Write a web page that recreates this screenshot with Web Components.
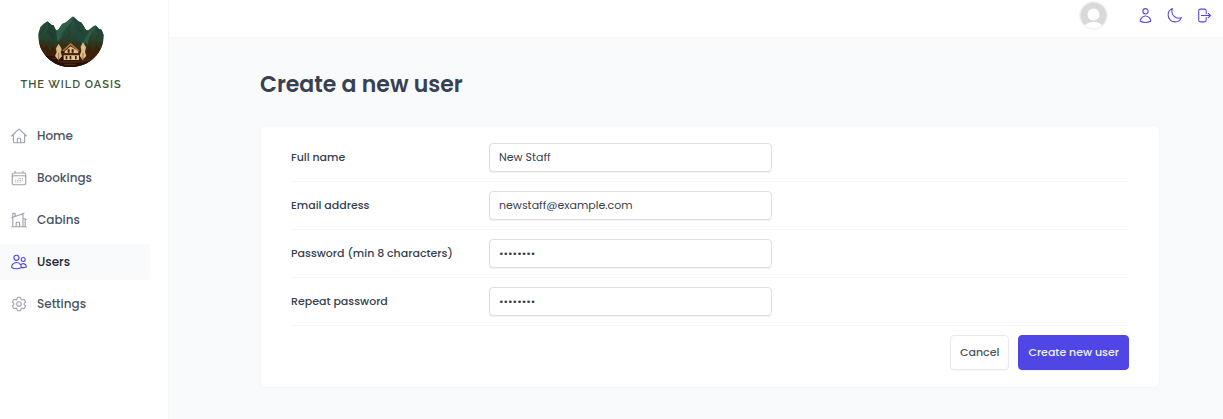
<!DOCTYPE html>
<html lang="en">
<head>
<meta charset="utf-8">
<meta name="viewport" content="width=device-width, initial-scale=1">
<title>The Wild Oasis</title>
<style>
:root {
  --brand: #4f46e5;
  --grey-0: #fff;
  --grey-50: #f9fafb;
  --grey-100: #f5f6f8;
  --grey-200: #e8eaed;
  --grey-300: #dcdfe3;
  --grey-400: #9ca3af;
  --grey-600: #4b5563;
  --grey-700: #374151;
  --grey-800: #1f2937;
}
body {
  margin: 0;
  font-family: Poppins, Inter, sans-serif;
  font-size: 11px;
  color: var(--grey-700);
  background: var(--grey-50);
}
</style>
</head>
<body>
<app-shell>
  <app-sidebar slot="sidebar">
    <app-logo slot="logo"></app-logo>
    <nav-item icon="home">Home</nav-item>
    <nav-item icon="calendar">Bookings</nav-item>
    <nav-item icon="cabin">Cabins</nav-item>
    <nav-item icon="users" active>Users</nav-item>
    <nav-item icon="cog">Settings</nav-item>
  </app-sidebar>
  <app-header slot="header"></app-header>
  <page-title>Create a new user</page-title>
  <form-card>
    <form-field label="Full name" type="text" value="New Staff"></form-field>
    <form-field label="Email address" type="email" value="newstaff@example.com"></form-field>
    <form-field label="Password (min 8 characters)" type="password" value="password"></form-field>
    <form-field label="Repeat password" type="password" value="password"></form-field>
    <app-button slot="actions" variant="secondary">Cancel</app-button>
    <app-button slot="actions" variant="primary">Create new user</app-button>
  </form-card>
</app-shell>

<script>
const ICONS = {
  home: "M2.25 12l8.954-8.955c.44-.439 1.152-.439 1.591 0L21.75 12M4.5 9.75v10.125c0 .621.504 1.125 1.125 1.125H9.75v-4.875c0-.621.504-1.125 1.125-1.125h2.25c.621 0 1.125.504 1.125 1.125V21h4.125c.621 0 1.125-.504 1.125-1.125V9.75M8.25 21h8.25",
  calendar: "M6.75 3v2.25M17.25 3v2.25M3 18.75V7.5a2.25 2.25 0 012.25-2.25h13.5A2.25 2.25 0 0121 7.5v11.25m-18 0A2.25 2.25 0 005.25 21h13.5A2.25 2.25 0 0021 18.75m-18 0v-7.5A2.25 2.25 0 015.25 9h13.5A2.25 2.25 0 0121 11.25v7.5m-9-6h.008v.008H12v-.008zM12 15h.008v.008H12V15zm0 2.25h.008v.008H12v-.008zM9.75 15h.008v.008H9.75V15zm0 2.25h.008v.008H9.75v-.008zM7.5 15h.008v.008H7.5V15zm0 2.25h.008v.008H7.5v-.008zm6.75-4.5h.008v.008h-.008v-.008zm0 2.25h.008v.008h-.008V15zm0 2.25h.008v.008h-.008v-.008zm2.25-4.5h.008v.008H16.5v-.008zm0 2.25h.008v.008H16.5V15z",
  cabin: "M8.25 21v-4.875c0-.621.504-1.125 1.125-1.125h2.25c.621 0 1.125.504 1.125 1.125V21m0 0h4.5V3.545M12.75 21h7.5V10.75M2.25 21h1.5m18 0h-18M2.25 9l4.5-1.636M18.75 3l-1.5.545m0 6.205l3 1m1.5.5l-1.5-.5M6.75 7.364V3h-3v18m3-13.636l10.5-3.819",
  users: "M15 19.128a9.38 9.38 0 002.625.372 9.337 9.337 0 004.121-.952 4.125 4.125 0 00-7.533-2.493M15 19.128v-.003c0-1.113-.285-2.16-.786-3.07M15 19.128v.106A12.318 12.318 0 018.624 21c-2.331 0-4.512-.645-6.374-1.766l-.001-.109a6.375 6.375 0 0111.964-3.07M12 6.375a3.375 3.375 0 11-6.75 0 3.375 3.375 0 016.75 0zm8.25 2.25a2.625 2.625 0 11-5.25 0 2.625 2.625 0 015.25 0z",
  cog: "M9.594 3.94c.09-.542.56-.94 1.11-.94h2.593c.55 0 1.02.398 1.11.94l.213 1.281c.063.374.313.686.645.87.074.04.147.083.22.127.324.196.72.257 1.075.124l1.217-.456a1.125 1.125 0 011.37.49l1.296 2.247a1.125 1.125 0 01-.26 1.431l-1.003.827c-.293.24-.438.613-.431.992a6.759 6.759 0 010 .255c-.007.378.138.75.43.99l1.005.828c.424.35.534.954.26 1.43l-1.298 2.247a1.125 1.125 0 01-1.369.491l-1.217-.456c-.355-.133-.75-.072-1.076.124a6.57 6.57 0 01-.22.128c-.331.183-.581.495-.644.869l-.213 1.28c-.09.543-.56.941-1.11.941h-2.594c-.55 0-1.02-.398-1.11-.94l-.213-1.281c-.062-.374-.312-.686-.644-.87a6.52 6.52 0 01-.22-.127c-.325-.196-.72-.257-1.076-.124l-1.217.456a1.125 1.125 0 01-1.369-.49l-1.297-2.247a1.125 1.125 0 01.26-1.431l1.004-.827c.292-.24.437-.613.43-.992a6.932 6.932 0 010-.255c.007-.378-.138-.75-.43-.99l-1.004-.828a1.125 1.125 0 01-.26-1.43l1.297-2.247a1.125 1.125 0 011.37-.491l1.216.456c.356.133.751.072 1.076-.124.072-.044.146-.087.22-.128.332-.183.582-.495.644-.869l.214-1.281zM15 12a3 3 0 11-6 0 3 3 0 016 0z",
  user: "M15.75 6a3.75 3.75 0 11-7.5 0 3.75 3.75 0 017.5 0zM4.501 20.118a7.5 7.5 0 0114.998 0A17.933 17.933 0 0112 21.75c-2.676 0-5.216-.584-7.499-1.632z",
  moon: "M21.752 15.002A9.718 9.718 0 0118 15.75c-5.385 0-9.75-4.365-9.75-9.75 0-1.33.266-2.597.748-3.752A9.753 9.753 0 003 11.25C3 16.635 7.365 21 12.75 21a9.753 9.753 0 009.002-5.998z",
  logout: "M15.75 9V5.25A2.25 2.25 0 0013.5 3h-6a2.25 2.25 0 00-2.25 2.25v13.5A2.25 2.25 0 007.5 21h6a2.25 2.25 0 002.25-2.25V15m3 0l3-3m0 0l-3-3m3 3H9"
};
const icon = name => `<svg viewBox="0 0 24 24" fill="none" stroke="currentColor" stroke-width="1.5" stroke-linecap="round" stroke-linejoin="round" aria-hidden="true"><path d="${ICONS[name]}"/></svg>`;

function define(name, render) {
  customElements.define(name, class extends HTMLElement {
    connectedCallback() {
      if (!this.shadowRoot) this.attachShadow({ mode: "open" }).innerHTML = render(this);
    }
  });
}

define("app-shell", () => `
  <style>
    :host { display: grid; grid-template-columns: 169px 1fr; grid-template-rows: auto 1fr; min-height: 100vh; }
    aside { grid-row: 1 / 3; }
    main { padding: 30px 49px 30px 77px; }
    .content { max-width: 900px; margin: 0 auto; display: flex; flex-direction: column; gap: 24px; }
  </style>
  <aside><slot name="sidebar"></slot></aside>
  <slot name="header"></slot>
  <main><div class="content"><slot></slot></div></main>`);

define("app-sidebar", () => `
  <style>
    :host { display: flex; flex-direction: column; gap: 25px; box-sizing: border-box; min-height: 100vh;
      padding: 16px 18px 18px 0; background: var(--grey-0); border-right: 1px solid var(--grey-100); }
    nav { display: flex; flex-direction: column; gap: 6px; }
  </style>
  <slot name="logo"></slot>
  <nav aria-label="Main"><slot></slot></nav>`);

define("app-logo", () => `
  <style>
    :host { display: flex; flex-direction: column; align-items: center; gap: 9px; margin-right: 8px; }
    svg { display: block; width: 66px; height: 52px; }
    span { font: 600 11px/16px Raleway, Lato, sans-serif; letter-spacing: 1px; color: #3d5638; white-space: nowrap; }
  </style>
  <svg viewBox="26 19 198 156" aria-hidden="true">
    <defs>
      <linearGradient id="land" x1="0" y1="0" x2="0" y2="1">
        <stop offset="0" stop-color="#2b5643"/><stop offset=".42" stop-color="#264432"/>
        <stop offset=".62" stop-color="#382a12"/><stop offset="1" stop-color="#32170b"/>
      </linearGradient>
      <clipPath id="shape"><path d="M27 72L33 52L42 43L54 35L66 45L73 47L80 62L87 60L98 43L110 38L131 20L147 35L157 39L170 61L177 62L190 51L199 47L209 58L217 60L223 76C224 130 181 172 125 172C69 172 25 130 27 72Z"/></clipPath>
    </defs>
    <g clip-path="url(#shape)">
      <rect x="24" y="16" width="202" height="160" fill="url(#land)"/>
      <path d="M131 20L124 42L108 54L100 78L84 96L80 62L98 43L110 38Z" fill="#30604a"/>
      <path d="M131 20L137 45L130 55L145 69L139 84L157 104L170 86L175 66L157 39Z" fill="#22483a"/>
      <path d="M54 35L57 57L50 68L65 82L63 101L82 110L80 62L73 47Z" fill="#1f4032"/>
      <path d="M199 47L193 70L181 80L174 105L156 110L171 78L190 51Z" fill="#2f5942"/>
      <path d="M199 47L205 67L200 80L215 99L223 76L217 60Z" fill="#234433"/>
      <g fill="none" stroke="#1c382b" stroke-width="2">
        <path d="M124 41L117 59L121 74L107 91M103 65L94 81M48 43L43 60L34 72M60 66L74 89M145 50L160 75M192 63L178 96M205 77L213 84"/>
      </g>
      <path d="M22 98L34 91L37 98L44 90L50 102L57 94L63 105L71 97L79 109L89 101L100 107L160 107L168 97L176 108L185 98L192 109L202 96L211 105L225 92V120L196 126H55L22 119Z" fill="#30331a"/>
      <path d="M26 112L36 102L42 115L52 103L61 121L72 109L81 127H170L181 108L191 122L203 107L213 117L224 103V176H24Z" fill="#3c210d"/>
      <path d="M40 140Q90 136 123 151T198 148L180 176H65Z" fill="#291008"/>
      <path d="M68 146H87M91 157H151M165 151H184M105 164H139" stroke="#5c3014" stroke-width="3"/>
      <path d="M124 101L99 121V154H151V121Z" fill="#2d150c"/>
      <path d="M124 99L97 124H104L124 107L145 124H152Z" fill="#a8733e"/>
      <path d="M124 110L106 125V131H147V125Z" fill="#e2b97e"/>
      <path d="M103 137H149V151H103Z" fill="#e9c48b"/>
      <path d="M115 119H121V129H115ZM127 119H133V129H127ZM109 139H114V149H109ZM121 139H126V149H121ZM137 139H142V149H137Z" fill="#3a1c0d"/>
      <path d="M97 133H153" stroke="#4b2812" stroke-width="4"/>
      <path d="M88 102L80 116L82 128L77 139L87 151L98 140L94 128L97 118Z" fill="#dfbb82"/>
      <path d="M161 98L154 111L156 124L151 138L160 151L171 139L167 126L170 113Z" fill="#e2bd84"/>
      <path d="M88 130V157M161 130V158" stroke="#7d4b24" stroke-width="2"/>
    </g>
  </svg>
  <span>THE WILD OASIS</span>`);

define("nav-item", el => `
  <style>
    :host { display: block; color: var(--grey-600); }
    a { display: flex; align-items: center; gap: 9px; height: 36px; padding-left: 10px; border-radius: 0 4px 4px 0;
      font-size: 12px; font-weight: 500; line-height: 18px; color: inherit; text-decoration: none; }
    svg { width: 18px; height: 18px; color: var(--grey-400); }
    :host([active]) a { background: var(--grey-50); color: var(--grey-800); }
    :host([active]) svg { color: var(--brand); }
  </style>
  <a href="#${el.getAttribute("icon")}"${el.hasAttribute("active") ? ' aria-current="page"' : ""}>${icon(el.getAttribute("icon"))}<slot></slot></a>`);

define("app-header", () => `
  <style>
    :host { display: flex; justify-content: flex-end; align-items: center; gap: 29px; padding: 1px 11px 7px;
      background: var(--grey-0); border-bottom: 1px solid var(--grey-100); }
    .avatar { display: block; width: 29px; height: 29px; }
    .tools { display: flex; gap: 12px; }
    button { display: block; padding: 0; border: 0; background: none; color: var(--brand); }
    button svg { display: block; width: 17px; height: 17px; }
  </style>
  <svg class="avatar" viewBox="0 0 58 58" role="img" aria-label="Avatar">
    <clipPath id="face"><circle cx="29" cy="29" r="26"/></clipPath>
    <circle cx="29" cy="29" r="29" fill="#f3f4f6"/>
    <g clip-path="url(#face)">
      <rect width="58" height="58" fill="#d9d9d9"/>
      <circle cx="29" cy="27" r="12" fill="#fff"/>
      <ellipse cx="29" cy="52" rx="18" ry="10" fill="#fff"/>
    </g>
  </svg>
  <div class="tools">
    <button type="button" aria-label="Account">${icon("user")}</button>
    <button type="button" aria-label="Dark mode">${icon("moon")}</button>
    <button type="button" aria-label="Log out">${icon("logout")}</button>
  </div>`);

define("page-title", () => `
  <style>
    :host { display: block; }
    h1 { margin: 0; font-size: 22px; font-weight: 600; line-height: 33px; }
  </style>
  <h1><slot></slot></h1>`);

define("form-card", () => `
  <style>
    :host { display: block; }
    form { padding: 8px 30px; background: var(--grey-0); border: 1px solid var(--grey-100); border-radius: 6px; }
    .actions { display: flex; justify-content: flex-end; gap: 9px; padding: 9px 0; }
  </style>
  <form>
    <slot></slot>
    <div class="actions"><slot name="actions"></slot></div>
  </form>`);

define("form-field", el => `
  <style>
    :host { display: grid; grid-template-columns: 180px 1fr 1.2fr; column-gap: 18px; align-items: center;
      padding: 9px 0; border-bottom: 1px solid var(--grey-100); }
    label { font-weight: 500; line-height: 17px; white-space: nowrap; }
    input { box-sizing: border-box; width: 100%; min-width: 0; height: 29px; padding: 0 9px; border: 1px solid var(--grey-300);
      border-radius: 4px; background: var(--grey-0); box-shadow: 0 1px 1px rgba(0, 0, 0, .06);
      font: inherit; color: inherit; }
  </style>
  <label for="field">${el.getAttribute("label")}</label>
  <input id="field" type="${el.getAttribute("type")}" value="${el.getAttribute("value")}" autocomplete="off">`);

define("app-button", () => `
  <style>
    :host { display: block; }
    button { display: block; height: 35px; padding: 0 9px; border: 1px solid var(--grey-200); border-radius: 4px;
      background: var(--grey-0); box-shadow: 0 1px 1px rgba(0, 0, 0, .04);
      font: inherit; font-weight: 500; color: var(--grey-600); white-space: nowrap; }
    :host([variant=primary]) button { background: var(--brand); border-color: var(--brand); color: #eef2ff; }
  </style>
  <button type="button"><slot></slot></button>`);
</script>
</body>
</html>
